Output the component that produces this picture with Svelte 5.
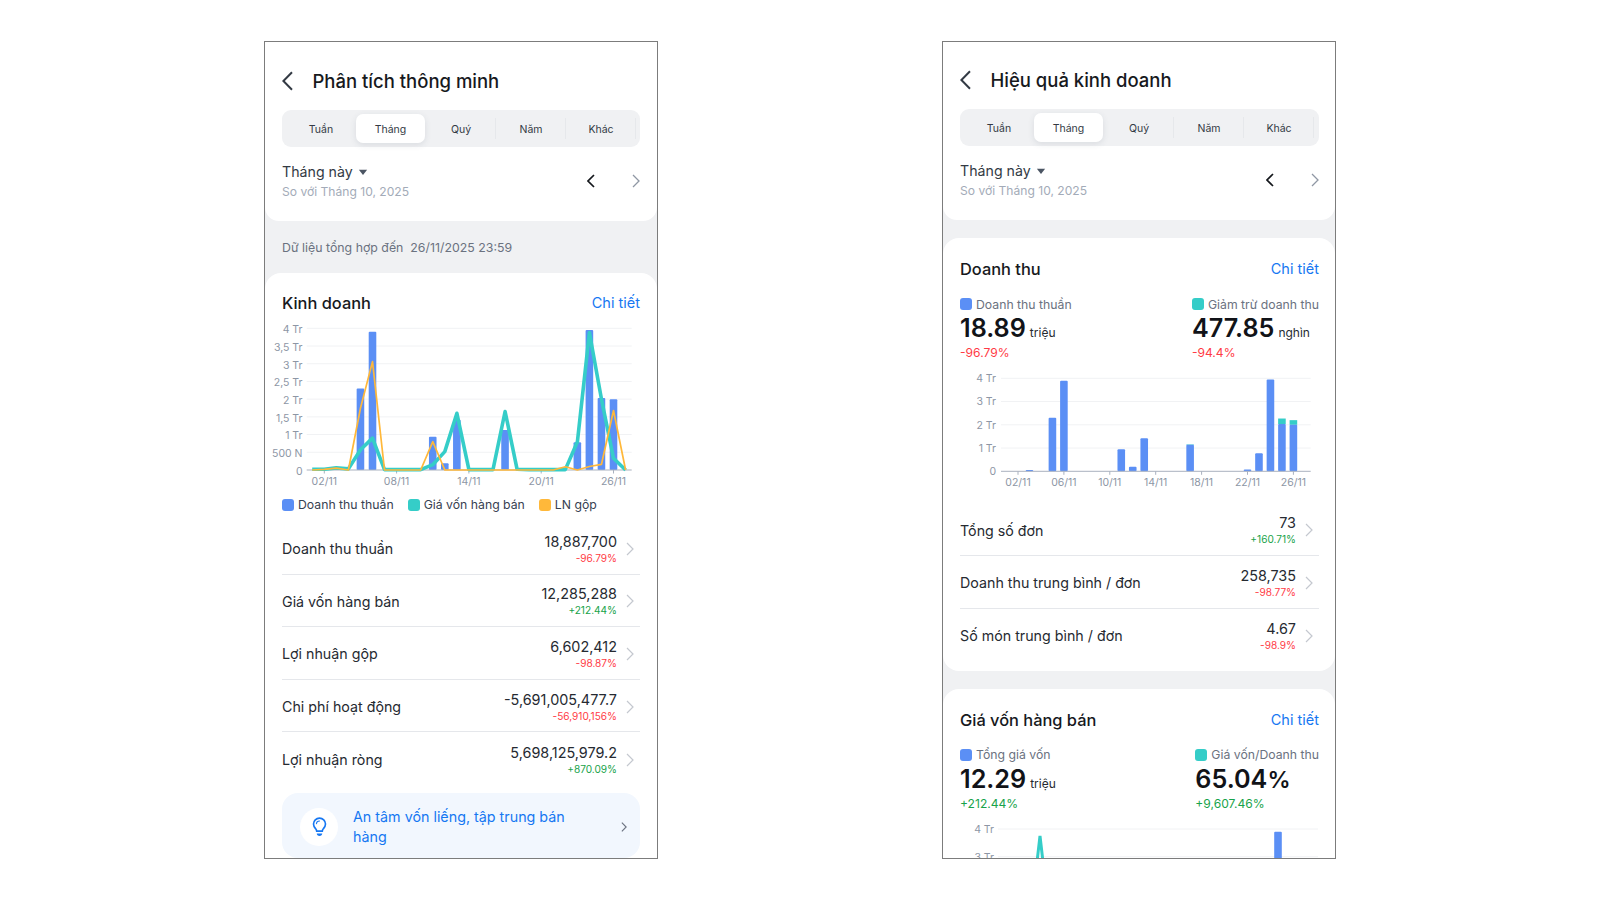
<script>
  const tabs = ['Tuần', 'Tháng', 'Quý', 'Năm', 'Khác'];
  const BLUE = '#5b8ff5', TEAL = '#35cdc8', ORANGE = '#ffb83a';

  const leftRows = [
    ['Doanh thu thuần', '18,887,700', '-96.79%', false],
    ['Giá vốn hàng bán', '12,285,288', '+212.44%', true],
    ['Lợi nhuận gộp', '6,602,412', '-98.87%', false],
    ['Chi phí hoạt động', '-5,691,005,477.7', '-56,910,156%', false],
    ['Lợi nhuận ròng', '5,698,125,979.2', '+870.09%', true]
  ];
  const rightRows = [
    ['Tổng số đơn', '73', '+160.71%', true],
    ['Doanh thu trung bình / đơn', '258,735', '-98.77%', false],
    ['Số món trung bình / đơn', '4.67', '-98.9%', false]
  ];

  const chartA = {
    height: 174, zero: 152, top: 10.3, max: 4, x0: 42.3, dx: 12.05, left: 24.7, right: 349.7, labelEnd: 20.5, labelY: 167, labelShift: 4.8,
    grid: ['0', '500 N', '1 Tr', '1,5 Tr', '2 Tr', '2,5 Tr', '3 Tr', '3,5 Tr', '4 Tr'],
    ticks: [[2, '02/11'], [8, '08/11'], [14, '14/11'], [20, '20/11'], [26, '26/11']],
    bars: [[5, 2.3], [6, 3.9], [11, 0.94], [12, 0.19], [13, 1.42], [17, 1.13], [23, 0.78], [24, 3.95], [25, 2.03], [26, 2.0]],
    lines: [
      { color: TEAL, w: 3.6, v: [0.02, 0.02, 0.06, 0.03, 0.57, 0.9, 0.01, 0.01, 0.01, 0.01, 0.15, 0.52, 1.6, 0.01, 0.01, 0.01, 1.65, 0.02, 0.01, 0.01, 0.01, 0.01, 0.8, 3.88, 2.0, 0.33, 0] },
      { color: ORANGE, w: 1.7, v: [0, 0.02, 0.05, 0, 1.75, 3.06, 0, 0, 0, 0, 0.8, 0, 0, 0, 0, 0, 0, 0, 0, 0, 0, 0.09, 0, 0.1, 0.16, 1.68, 0] }
    ]
  };
  const chartB = {
    height: 127, zero: 103.3, top: 10.3, max: 4, x0: 58, dx: 11.475, left: 41, right: 350.7, labelEnd: 36, labelY: 118, labelShift: 3.8,
    grid: ['0', '1 Tr', '2 Tr', '3 Tr', '4 Tr'],
    ticks: [[2, '02/11'], [6, '06/11'], [10, '10/11'], [14, '14/11'], [18, '18/11'], [22, '22/11'], [26, '26/11']],
    bars: [[3, 0.06], [5, 2.3], [6, 3.9], [11, 0.95], [12, 0.2], [13, 1.42], [17, 1.14, 0.02], [22, 0.08], [23, 0.78], [24, 3.95], [25, 2.03, 0.24], [26, 2.0, 0.2]],
    lines: []
  };
  const chartC = {
    height: 40, zero: 121, top: 10, max: 4, x0: 80, dx: 11.9, left: 38, right: 358, labelEnd: 34, labelY: 200, labelShift: 3.8,
    grid: ['0', '1 Tr', '2 Tr', '3 Tr', '4 Tr'],
    ticks: [],
    bars: [[22, 3.9]],
    lines: []
  };

  const xOf = (c, d) => c.x0 + (d - 2) * c.dx;
  const yOf = (c, v) => c.zero - (v / c.max) * (c.zero - c.top);
  const gridY = (c, i) => c.zero - (i / (c.grid.length - 1)) * (c.zero - c.top);
  const pts = (c, v) => v.map((val, i) => `${xOf(c, i + 1).toFixed(1)},${yOf(c, val).toFixed(1)}`).join(' ');
  const ptsC = (c) => `68,${yOf(c, 0)} 80,${yOf(c, 3.75)} 92,${yOf(c, 0)}`;
</script>

{#snippet chev(cls)}
  <svg class={cls} viewBox="0 0 8 14" aria-hidden="true"><path d="M1 1l6 6-6 6" /></svg>
{/snippet}

{#snippet top(title)}
  <div class="top">
    <header class="head">
      <svg class="back" viewBox="0 0 11 20" aria-hidden="true"><path d="M10 1.2L1.4 10l8.6 8.8" /></svg>
      <h1>{title}</h1>
    </header>
    <div class="tabs">
      {#each tabs as t, i}
        <div class="tab" class:active={i === 1} class:sep={i >= 2}>{t}</div>
      {/each}
    </div>
    <div class="period">
      <div>
        <div class="pname">Tháng này <svg class="caret" viewBox="0 0 9 6" aria-hidden="true"><path d="M.8.6h7.4L4.5 5.2z" /></svg></div>
        <div class="psub">So với Tháng 10, 2025</div>
      </div>
      <div class="arrows">
        <svg class="pa dark" viewBox="0 0 8 14" aria-hidden="true"><path d="M7 1L1 7l6 6" /></svg>
        <svg class="pa" viewBox="0 0 8 14" aria-hidden="true"><path d="M1 1l6 6-6 6" /></svg>
      </div>
    </div>
  </div>
{/snippet}

{#snippet chart(c, clipLine)}
  <svg class="chart" width="358" height={c.height} viewBox="0 0 358 {c.height}">
    {#each c.grid as g, i}
      {#if i > 0}
        <line x1={c.left} x2={c.right} y1={gridY(c, i)} y2={gridY(c, i)} stroke="#f1f2f4" stroke-width="1" />
      {/if}
      <text x={c.labelEnd} y={gridY(c, i) + c.labelShift} text-anchor="end" class="axis">{g}</text>
    {/each}
    {#each c.bars as b}
      {@const x = xOf(c, b[0]) - 3.8}
      {#if b[2]}
        <rect x={x} y={yOf(c, b[1] + b[2])} width="7.6" height={c.zero - yOf(c, b[2])} fill={TEAL} />
      {/if}
      <rect x={x} y={yOf(c, b[1])} width="7.6" height={c.zero - yOf(c, b[1])} rx="1" fill={BLUE} />
    {/each}
    <line x1={c.left} x2={c.right} y1={c.zero} y2={c.zero} stroke="#a9b1bf" stroke-width="1" />
    {#each c.ticks as t}
      <line x1={xOf(c, t[0])} x2={xOf(c, t[0])} y1={c.zero} y2={c.zero + 3.5} stroke="#a9b1bf" stroke-width="1" />
      <text x={xOf(c, t[0])} y={c.labelY} text-anchor="middle" class="axis">{t[1]}</text>
    {/each}
    {#if clipLine}
      <polyline points={ptsC(c)} fill="none" stroke={TEAL} stroke-width="3" stroke-linejoin="miter" />
    {:else}
      {#each c.lines as l}
        <polyline points={pts(c, l.v)} fill="none" stroke={l.color} stroke-width={l.w} stroke-linejoin="round" />
      {/each}
    {/if}
  </svg>
{/snippet}

{#snippet rows(list)}
  <div class="rows">
    {#each list as r}
      <div class="row">
        <div class="rl">{r[0]}</div>
        <div class="rv">
          <div class="val">{r[1]}</div>
          <div class="dl" class:up={r[3]}>{r[2]}</div>
        </div>
        {@render chev('rc')}
      </div>
    {/each}
  </div>
{/snippet}

{#snippet metric(color, label, num, suffix, unit, delta, up)}
  <div>
    <div class="ml"><i style="background:{color}"></i>{label}</div>
    <div class="mv"><b>{num}{#if suffix}<em>{suffix}</em>{/if}</b>{#if unit}<span>{unit}</span>{/if}</div>
    <div class="md" class:up={up}>{delta}</div>
  </div>
{/snippet}

<div class="stage">
  <section class="phone left">
    {@render top('Phân tích thông minh')}
    <div class="note">Dữ liệu tổng hợp đến&nbsp; 26/11/2025 23:59</div>
    <div class="card">
      <div class="ct"><h2>Kinh doanh</h2><a href="#a">Chi tiết</a></div>
      {@render chart(chartA, false)}
      <div class="legend">
        <span><i style="background:{BLUE}"></i>Doanh thu thuần</span>
        <span><i style="background:{TEAL}"></i>Giá vốn hàng bán</span>
        <span><i style="background:{ORANGE}"></i>LN gộp</span>
      </div>
      {@render rows(leftRows)}
      <div class="banner">
        <div class="bulb">
          <svg viewBox="0 0 16 22" width="15" height="20" aria-hidden="true">
            <path d="M8 1.2a6.6 6.6 0 0 0-6.6 6.6c0 2.5 1.3 3.9 2.4 5.2.7.8 1 1.6 1.1 2.6h6.2c.1-1 .4-1.8 1.1-2.6 1.1-1.3 2.4-2.7 2.4-5.2A6.6 6.6 0 0 0 8 1.2z" fill="none" stroke="#1677f2" stroke-width="1.8" />
            <path d="M8 4.4c-1.8 0-3.2 1.3-3.4 3" fill="none" stroke="#1677f2" stroke-width="1.2" stroke-linecap="round" />
            <path d="M5 18.2h6c0 1.5-1.2 2.6-3 2.6s-3-1.1-3-2.6z" fill="#1677f2" />
          </svg>
        </div>
        <div class="btext">An tâm vốn liếng, tập trung bán hàng</div>
        {@render chev('bc')}
      </div>
    </div>
  </section>

  <section class="phone right">
    {@render top('Hiệu quả kinh doanh')}
    <div class="gap"></div>
    <div class="card first">
      <div class="ct"><h2>Doanh thu</h2><a href="#a">Chi tiết</a></div>
      <div class="metrics">
        {@render metric(BLUE, 'Doanh thu thuần', '18.89', '', 'triệu', '-96.79%', false)}
        {@render metric(TEAL, 'Giảm trừ doanh thu', '477.85', '', 'nghìn', '-94.4%', false)}
      </div>
      {@render chart(chartB, false)}
      {@render rows(rightRows)}
    </div>
    <div class="gap"></div>
    <div class="card second">
      <div class="ct"><h2>Giá vốn hàng bán</h2><a href="#a">Chi tiết</a></div>
      <div class="metrics">
        {@render metric(BLUE, 'Tổng giá vốn', '12.29', '', 'triệu', '+212.44%', true)}
        {@render metric(TEAL, 'Giá vốn/Doanh thu', '65.04', '%', '', '+9,607.46%', true)}
      </div>
      {@render chart(chartC, true)}
    </div>
  </section>
</div>

<style>
  :global(body) { margin: 0; background: #fff; }
  .stage {
    display: flex;
    gap: 284px;
    height: 900px;
    box-sizing: border-box;
    padding: 41px 0 0 264px;
    font-family: Inter, "Liberation Sans", sans-serif;
    color: #1d2129;
    overflow: hidden;
  }
  .phone {
    width: 394px;
    height: 818px;
    box-sizing: border-box;
    border: 1px solid #7c7c7c;
    background: #f0f1f3;
    overflow: hidden;
  }
  .top {
    background: #fff;
    padding: 21px 17px 0;
    border-radius: 0 0 14px 14px;
    height: 179px;
    box-sizing: border-box;
  }
  .right .top { padding: 20px 16px 0 17px; height: 178px; }
  .head { display: flex; align-items: center; height: 36px; }
  .back { width: 11px; height: 20px; margin-right: 19.5px; fill: none; stroke: #333a44; stroke-width: 2; }
  h1 { margin: 0; font-size: 18.5px; font-weight: 500; line-height: 36px; color: #17191d; }
  .tabs {
    display: flex;
    margin-top: 11px;
    height: 36.5px;
    padding: 4px;
    box-sizing: border-box;
    background: #f0f1f3;
    border-radius: 9px;
  }
  .tab {
    width: 70px;
    height: 28.5px;
    line-height: 31px;
    text-align: center;
    font-size: 10.5px;
    color: #333a44;
    position: relative;
    flex: none;
  }
  .tab.sep::after {
    content: "";
    position: absolute;
    right: 0;
    top: 4px;
    bottom: 4px;
    width: 1px;
    background: #e6e8eb;
  }
  .tab.active {
    background: #fff;
    width: 69px;
    margin-right: 1px;
    border-radius: 7px;
    box-shadow: 0 2px 6px rgba(60, 70, 90, 0.12);
  }
  .period { display: flex; justify-content: space-between; align-items: center; margin-top: 15.5px; }
  .pname { font-size: 14.2px; line-height: 20px; color: #333a44; }
  .caret { width: 10px; height: 7px; margin-left: 1px; vertical-align: 1px; fill: #4b5563; }
  .psub { font-size: 12.1px; line-height: 18px; margin-top: 1px; color: #a3abb8; }
  .arrows { display: flex; gap: 37px; margin-bottom: 2px; }
  .pa { width: 8px; height: 14px; fill: none; stroke: #8f97a4; stroke-width: 1.3; }
  .pa.dark { stroke: #14171c; stroke-width: 1.7; }
  .note { height: 52px; line-height: 54px; padding-left: 17px; font-size: 12.35px; color: #6b7280; }
  .gap { height: 18px; }
  .card { background: #fff; border-radius: 16px 16px 0 0; padding: 18px 17px 0; }
  .right .card { padding-right: 16px; }
  .card.first { border-radius: 16px; padding-top: 19px; padding-bottom: 9.5px; }
  .card.second { padding-top: 19px; border-radius: 16px 16px 0 0; }
  .ct { display: flex; justify-content: space-between; align-items: center; height: 24px; }
  h2 { margin: 0; font-size: 16.4px; font-weight: 500; color: #17191d; }
  .ct a { font-size: 14.5px; line-height: 23px; margin-bottom: 1px; color: #1677f2; text-decoration: none; }
  .chart { display: block; overflow: visible; margin-top: 3px; }
  .axis { font-size: 10.5px; fill: #8d96a5; font-family: Inter, "Liberation Sans", sans-serif; }
  .metrics + .chart { margin-top: 6px; }
  .second .chart { margin-top: 6.5px; }
  .legend { display: flex; height: 20px; margin-top: 3px; font-size: 12.25px; line-height: 20px; color: #374151; }
  .legend span { display: flex; align-items: center; margin-right: 14px; white-space: nowrap; }
  .legend i, .ml i { width: 12px; height: 12px; border-radius: 3px; margin-right: 4px; flex: none; }
  .rows { margin-top: 7px; }
  .first .rows { margin-top: 8.5px; }
  .row {
    display: flex;
    align-items: center;
    height: 52.6px;
    padding-top: 2px;
    box-sizing: border-box;
    border-bottom: 1px solid #e5e7eb;
  }
  .row:last-child { border-bottom: 0; }
  .rl { flex: 1; font-size: 14.25px; color: #262a31; }
  .rv { text-align: right; }
  .val { font-size: 14.4px; line-height: 18px; color: #262a31; }
  .dl { font-size: 10.1px; line-height: 14px; color: #ff3b45; }
  .dl.up, .md.up { color: #18a34a; }
  :global(.rc) { width: 8px; height: 14px; margin: 0 6px 0 9px; fill: none; stroke: #c4c8cf; stroke-width: 1.2; flex: none; }
  .banner {
    display: flex;
    align-items: center;
    margin-top: 8px;
    height: 65px;
    padding: 3px 13px 0 18px;
    box-sizing: border-box;
    background: #f2f7fe;
    border-radius: 16px;
  }
  .bulb {
    width: 38px;
    height: 38px;
    flex: none;
    border-radius: 50%;
    background: #fff;
    display: flex;
    align-items: center;
    justify-content: center;
  }
  .btext { flex: 1; margin-left: 15px; padding: 1px 36px 0 0; font-size: 14.3px; line-height: 20.6px; color: #1677f2; }
  :global(.bc) { width: 6px; height: 10px; fill: none; stroke: #6b7280; stroke-width: 1.6; flex: none; }
  .metrics { display: flex; justify-content: space-between; margin-top: 15px; }
  .ml { display: flex; align-items: center; height: 16px; font-size: 12.25px; color: #6b7280; white-space: nowrap; }
  .ml i { margin-right: 4px; }
  .mv { height: 32px; line-height: 32px; white-space: nowrap; }
  .mv b { font-size: 25.2px; font-weight: 600; color: #111318; }
  .mv em { font-style: normal; font-size: 23px; }
  .mv span { font-size: 12px; margin-left: 4px; color: #262a31; }
  .md { font-size: 12.1px; line-height: 18px; color: #ff3b45; }
</style>
